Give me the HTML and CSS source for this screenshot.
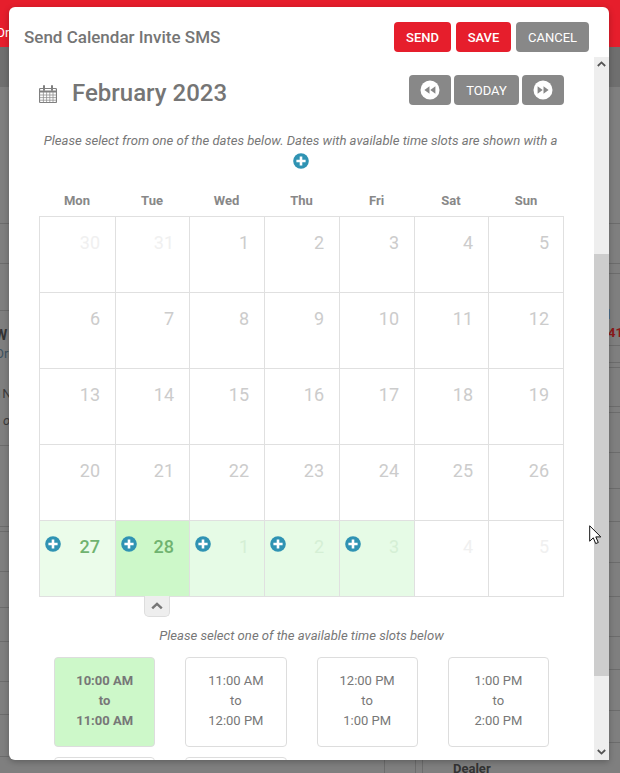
FILE: index.html
```html
<!DOCTYPE html>
<html lang="en">
<head>
  <meta charset="UTF-8" />
  <title>Send Calendar Invite SMS</title>
  <link rel="stylesheet" href="styles.css">
</head>
<body>
  <!-- dimmed page behind the dialog -->
  <div class="backdrop">
    <div class="topbar"><span class="topbar-text">Or</span></div>
    <div class="band"></div>
    <div class="rows">
      <div class="side side-left">
        <div class="bg-row" style="height:137px"></div>
        <div class="bg-row" style="height:40px"></div>
        <div class="bg-row" style="height:47px"></div>
        <div class="bg-row bg-text" style="height:135px">
          <b>W</b><span class="blue">Ori</span><span class="gap">1N</span><i>o</i>
        </div>
        <div class="bg-row" style="height:81px"></div>
        <div class="bg-row" style="height:5px"></div>
        <div class="bg-row" style="height:40px"></div>
        <div class="bg-row" style="height:36px"></div>
        <div class="bg-row" style="height:34px"></div>
        <div class="bg-row" style="height:40px"></div>
        <div class="bg-row" style="height:33px"></div>
        <div class="bg-row" style="height:42px"></div>
      </div>
      <div class="middle">
        <div class="dealer-row">
          <div class="dealer-gap"></div>
          <div class="dealer-cell"></div>
          <div class="dealer-cell dealer-thin"></div>
          <div class="dealer-name">Dealer</div>
        </div>
      </div>
      <div class="side side-right">
        <div class="bg-row" style="height:137px"></div>
        <div class="bg-row" style="height:40px"></div>
        <div class="bg-row" style="height:10px"></div>
        <div class="bg-row bg-text" style="height:72px"><span class="tick"></span><strong>41</strong></div>
        <div class="bg-row" style="height:17px"></div>
        <div class="bg-row" style="height:5px"></div>
        <div class="bg-row" style="height:39px"></div>
        <div class="bg-row" style="height:6px"></div>
        <div class="bg-row" style="height:40px"></div>
        <div class="bg-row" style="height:36px"></div>
        <div class="bg-row" style="height:33px"></div>
        <div class="bg-row" style="height:41px"></div>
        <div class="bg-row" style="height:34px"></div>
        <div class="bg-row" style="height:40px"></div>
        <div class="bg-row" style="height:33px"></div>
        <div class="bg-row" style="height:41px"></div>
        <div class="bg-row" style="height:32px"></div>
      </div>
    </div>
  </div>

  <div class="modal">
    <div class="modal-header">
      <div class="modal-title">Send Calendar Invite SMS</div>
      <div class="modal-actions">
        <button type="button" class="btn btn-red btn-send">Send</button>
        <button type="button" class="btn btn-red btn-save">Save</button>
        <button type="button" class="btn btn-grey btn-cancel">Cancel</button>
      </div>
    </div>

    <div class="modal-main">
      <div class="modal-body">
        <div class="cal-head">
          <svg class="cal-icon" width="18" height="18" viewBox="0 0 18 18">
            <path d="M1.5 3.5h15a1 1 0 0 1 1 1v12a1 1 0 0 1-1 1h-15a1 1 0 0 1-1-1v-12a1 1 0 0 1 1-1z" fill="none" stroke="#808080" stroke-width="1.2"/>
            <path d="M1 6.5h16" stroke="#808080" stroke-width="2"/>
            <path d="M1 10h16M1 12.6h16M1 15.2h16M4.4 7v10M7.6 7v10M10.8 7v10M14 7v10" stroke="#909090" stroke-width=".8"/>
            <path d="M5 1v4M13 1v4" stroke="#808080" stroke-width="2" stroke-linecap="round"/>
          </svg>
          <h1 class="month">February 2023</h1>
          <div class="cal-nav">
            <button type="button" class="btn btn-grey btn-arrow">
              <svg width="20" height="20" viewBox="0 0 20 20"><circle cx="10" cy="10" r="9.5" fill="#fff"/><path d="M9.5 6.2v7.6L4.4 10zM15.4 6.2v7.6L10.3 10z" fill="#888"/></svg>
            </button>
            <button type="button" class="btn btn-grey btn-today">Today</button>
            <button type="button" class="btn btn-grey btn-arrow">
              <svg width="20" height="20" viewBox="0 0 20 20"><circle cx="10" cy="10" r="9.5" fill="#fff"/><path d="M4.6 6.2v7.6L9.7 10zM10.5 6.2v7.6l5.1-3.8z" fill="#888"/></svg>
            </button>
          </div>
        </div>

        <p class="hint hint-dates">Please select from one of the dates below. Dates with available time slots are shown with a
          <svg class="plus plus-inline" width="16" height="16" viewBox="0 0 16 16"><circle cx="8" cy="8" r="7.8" fill="#2f93b3"/><path d="M8 3.4v9.2M3.4 8h9.2" stroke="#fff" stroke-width="2.6"/></svg>
        </p>

        <div class="weekdays">
          <div>Mon</div><div>Tue</div><div>Wed</div><div>Thu</div><div>Fri</div><div>Sat</div><div>Sun</div>
        </div>

        <div class="cal-grid">
          <div class="day other">30</div><div class="day other">31</div><div class="day">1</div><div class="day">2</div><div class="day">3</div><div class="day">4</div><div class="day">5</div>
          <div class="day">6</div><div class="day">7</div><div class="day">8</div><div class="day">9</div><div class="day">10</div><div class="day">11</div><div class="day">12</div>
          <div class="day">13</div><div class="day">14</div><div class="day">15</div><div class="day">16</div><div class="day">17</div><div class="day">18</div><div class="day">19</div>
          <div class="day">20</div><div class="day">21</div><div class="day">22</div><div class="day">23</div><div class="day">24</div><div class="day">25</div><div class="day">26</div>
          <div class="day open current">
            <svg class="plus" width="16" height="16" viewBox="0 0 16 16"><circle cx="8" cy="8" r="7.8" fill="#2f93b3"/><path d="M8 3.4v9.2M3.4 8h9.2" stroke="#fff" stroke-width="2.6"/></svg>27
          </div>
          <div class="day open current selected">
            <svg class="plus" width="16" height="16" viewBox="0 0 16 16"><circle cx="8" cy="8" r="7.8" fill="#2f93b3"/><path d="M8 3.4v9.2M3.4 8h9.2" stroke="#fff" stroke-width="2.6"/></svg>28
          </div>
          <div class="day open other-open">
            <svg class="plus" width="16" height="16" viewBox="0 0 16 16"><circle cx="8" cy="8" r="7.8" fill="#2f93b3"/><path d="M8 3.4v9.2M3.4 8h9.2" stroke="#fff" stroke-width="2.6"/></svg>1
          </div>
          <div class="day open other-open">
            <svg class="plus" width="16" height="16" viewBox="0 0 16 16"><circle cx="8" cy="8" r="7.8" fill="#2f93b3"/><path d="M8 3.4v9.2M3.4 8h9.2" stroke="#fff" stroke-width="2.6"/></svg>2
          </div>
          <div class="day open other-open">
            <svg class="plus" width="16" height="16" viewBox="0 0 16 16"><circle cx="8" cy="8" r="7.8" fill="#2f93b3"/><path d="M8 3.4v9.2M3.4 8h9.2" stroke="#fff" stroke-width="2.6"/></svg>3
          </div>
          <div class="day other">4</div><div class="day other">5</div>
        </div>

        <div class="collapse-tab">
          <svg width="12" height="8" viewBox="0 0 12 8"><path d="M1.2 6.4 6 1.8l4.8 4.6" fill="none" stroke="#777" stroke-width="2.4"/></svg>
        </div>

        <p class="hint hint-slots">Please select one of the available time slots below</p>

        <div class="slots">
          <div class="slot selected">10:00 AM<br>to<br>11:00 AM</div>
          <div class="slot">11:00 AM<br>to<br>12:00 PM</div>
          <div class="slot">12:00 PM<br>to<br>1:00 PM</div>
          <div class="slot">1:00 PM<br>to<br>2:00 PM</div>
          <div class="slot">2:00 PM<br>to<br>3:00 PM</div>
          <div class="slot">3:00 PM<br>to<br>4:00 PM</div>
        </div>
      </div>

      <div class="scrollbar">
        <svg class="scroll-up" width="9" height="6" viewBox="0 0 9 6"><path d="M.8 5 4.5 1.4 8.2 5" fill="none" stroke="#555" stroke-width="1.8"/></svg>
        <div class="scroll-thumb"></div>
        <svg class="scroll-down" width="9" height="6" viewBox="0 0 9 6"><path d="M.8 1 4.5 4.6 8.2 1" fill="none" stroke="#555" stroke-width="1.8"/></svg>
      </div>
    </div>
  </div>

  <svg class="cursor" width="13" height="20" viewBox="0 0 13 20">
    <path d="M.7.8v15.4l3.6-3.4 2.4 5.8 2.6-1.1-2.5-5.6h5z" fill="#fff" stroke="#111" stroke-width="1"/>
  </svg>
</body>
</html>
```

FILE: styles.css
```css
* { box-sizing: border-box; }
html, body { margin: 0; padding: 0; }
body { width: 620px; height: 773px; overflow: hidden; position: relative; font-family: Roboto, "Liberation Sans", sans-serif; color: #777; background: #7f7f7f; }

/* page behind the dialog */
.backdrop { height: 773px; display: flex; flex-direction: column; }
.topbar { height: 47px; background: #e61e2c; padding-top: 25px; font-size: 13px; line-height: 16px; color: #fff; margin-left: -4px; padding-left: 0; }
.topbar-text { display: block; }
.band { height: 40px; background: #6f6f6f; }
.rows { flex: 1; display: flex; min-height: 0; }
.side { width: 9px; overflow: hidden; flex: none; }
.side-right { width: 11px; }
.middle { flex: 1; display: flex; align-items: flex-end; }
.bg-row { border-bottom: 1px solid #6c6c6c; }
.bg-text { font-size: 13px; line-height: 16px; color: #3c3c3c; white-space: nowrap; display: flex; flex-direction: column; align-items: flex-start; }
.side-left .bg-text { padding-top: 16px; margin-left: -5px; width: 20px; }
.bg-text b { font-size: 14px; color: #333; }
.bg-text .blue { color: #3d5260; margin-top: 3px; }
.bg-text .gap { margin-top: 24px; }
.bg-text i { margin-top: 11px; margin-left: 8px; }
.side-right .bg-text { padding-top: 35px; margin-left: -1px; }
.tick { width: 1px; height: 10px; background: #4f6f8a; margin-left: 1px; }
.bg-text strong { color: #8b1a1a; font-size: 13px; margin-top: 6px; }
.dealer-row { width: 100%; height: 13px; display: flex; font-size: 13px; line-height: 16px; overflow: hidden; color: #333; font-weight: 700; }
.dealer-gap { width: 375px; }
.dealer-cell { width: 31px; border-left: 1px solid #6c6c6c; }
.dealer-thin { width: 7px; }
.dealer-name { border-left: 1px solid #6c6c6c; padding-left: 30px; padding-top: 1px; }

/* dialog */
.modal { position: absolute; left: 9px; top: 7px; width: 600px; height: 753px; background: #fff; border-radius: 6px 6px 0 6px; box-shadow: 0 2px 6px rgba(0,0,0,.25); display: flex; flex-direction: column; overflow: hidden; }
.modal-header { height: 50px; flex: none; display: flex; justify-content: space-between; padding: 15px 20px 0 15px; }
.modal-title { font-size: 17px; font-weight: 500; line-height: 30px; color: #757575; }
.modal-actions { display: flex; gap: 5px; }
.btn { height: 30px; border: 0; border-radius: 4px; color: #fff; font-family: inherit; font-size: 13px; font-weight: 500; text-transform: uppercase; padding: 0; display: flex; align-items: center; justify-content: center; }
.btn-red { background: #e61e2c; }
.btn-grey { background: #888; }
.btn-send { width: 57px; }
.btn-save { width: 55px; }
.btn-cancel { width: 73px; font-weight: 400; }

.modal-main { flex: 1; display: flex; min-height: 0; }
.modal-body { flex: 1; min-width: 0; overflow: hidden; padding: 18px 30px 0; }

.cal-head { display: flex; align-items: center; height: 30px; }
.cal-icon { flex: none; margin-top: 8px; }
.month { margin: 5px 0 0 15px; font-size: 24px; font-weight: 500; color: #757575; line-height: 30px; }
.cal-nav { margin-left: auto; display: flex; gap: 3px; }
.btn-arrow { width: 42px; }
.btn-today { width: 65px; font-weight: 400; }

.hint { margin: 0; font-size: 13.1px; font-style: italic; line-height: 20px; text-align: center; color: #777; }
.hint-dates { margin-top: 26px; height: 40px; padding-right: 2px; }
.plus { display: block; }
.plus-inline { display: inline-block; vertical-align: top; margin-top: 2px; }

.weekdays { display: grid; grid-template-columns: 76px 74px 75px 75px 75px 74px 76px; margin-top: 21px; height: 18px; font-size: 13px; font-weight: 700; line-height: 18px; text-align: center; color: #888; margin-bottom: 6px; }

.cal-grid { display: grid; grid-template-columns: 76px 74px 75px 75px 75px 74px 76px; grid-auto-rows: 76px; border-right: 1px solid #e0e0e0; border-bottom: 1px solid #e0e0e0; }
.day { position: relative; border-top: 1px solid #e0e0e0; border-left: 1px solid #e0e0e0; padding: 14px 15px 0 0; text-align: right; font-size: 18px; line-height: 24px; color: #ccc; }
.day.other { color: #f0f0f0; }
.day.open { background: #e6fbe6; }
.day.open .plus { position: absolute; left: 5px; top: 15px; }
.day.current { color: #70b370; font-weight: 500; background: #ebfcea; }
.day.selected { background: #cdf8c9; }
.day.other-open { color: #d5efd5; }

.collapse-tab { width: 26px; height: 21px; margin-left: 105px; margin-top: -1px; position: relative; background: #eee; border: 1px solid #ddd; border-top: 0; border-radius: 0 0 5px 5px; display: flex; align-items: center; justify-content: center; }
.hint-slots { margin-top: 9px; }

.slots { display: grid; grid-template-columns: repeat(4, 1fr); gap: 10px 30px; margin: 11px 15px 0; }
.slot { height: 90px; border: 1px solid #ddd; border-radius: 4px; padding: 13px 0; font-size: 13px; line-height: 20px; text-align: center; color: #777; }
.slot.selected { background: #cdf8c9; font-weight: 700; }

.scrollbar { width: 15px; flex: none; background: #eee; display: flex; flex-direction: column; align-items: center; }
.scroll-up { margin-top: 4px; flex: none; }
.scroll-thumb { align-self: stretch; height: 422px; margin-top: 187px; background: #cdcdcd; flex: none; }
.scroll-down { margin-top: 73px; flex: none; }

.cursor { position: absolute; left: 589px; top: 525px; }
```
